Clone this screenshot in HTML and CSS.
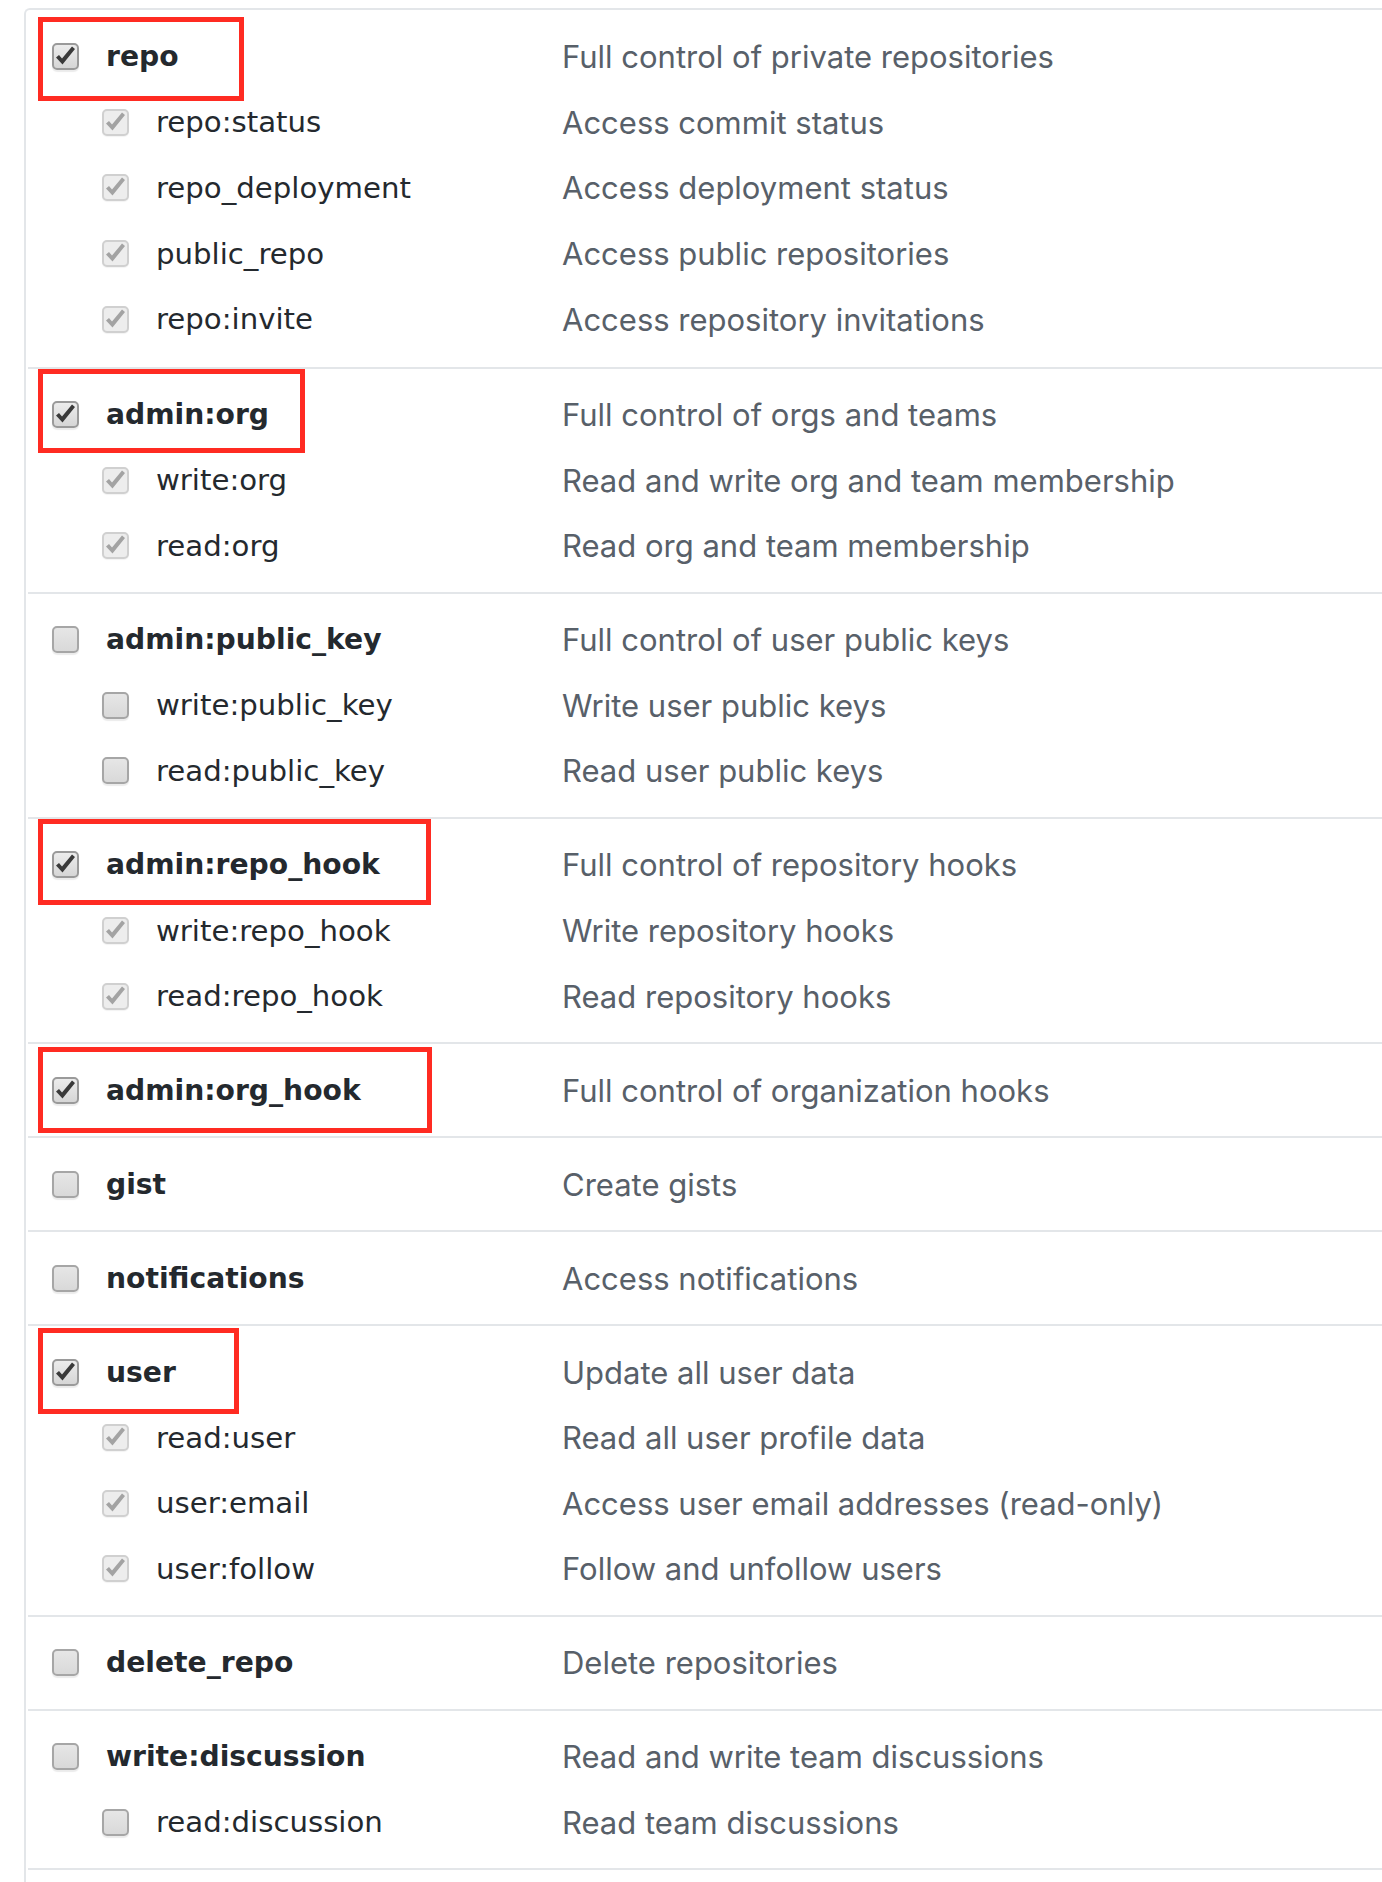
FILE: index.html
```html
<!DOCTYPE html>
<html lang="en">
<head>
<meta charset="utf-8">
<title>Scopes</title>
<link rel="stylesheet" href="styles.css">
</head>
<body>
<div class="scopes">

  <div class="section first">
    <div class="row parent">
      <span class="mark mark-repo"></span>
      <label class="name"><span class="cb on"><svg viewBox="0 0 27 27"><path d="M4 14.5 L7 12 L10 15.5 L20 3.5 L23 6 L10.5 21.5 Z"/></svg></span>repo</label>
      <span class="desc">Full control of private repositories</span>
    </div>
    <div class="row child">
      <label class="name"><span class="cb on dis"><svg viewBox="0 0 27 27"><path d="M4 14.5 L7 12 L10 15.5 L20 3.5 L23 6 L10.5 21.5 Z"/></svg></span>repo:status</label>
      <span class="desc">Access commit status</span>
    </div>
    <div class="row child">
      <label class="name"><span class="cb on dis"><svg viewBox="0 0 27 27"><path d="M4 14.5 L7 12 L10 15.5 L20 3.5 L23 6 L10.5 21.5 Z"/></svg></span>repo_deployment</label>
      <span class="desc">Access deployment status</span>
    </div>
    <div class="row child">
      <label class="name"><span class="cb on dis"><svg viewBox="0 0 27 27"><path d="M4 14.5 L7 12 L10 15.5 L20 3.5 L23 6 L10.5 21.5 Z"/></svg></span>public_repo</label>
      <span class="desc">Access public repositories</span>
    </div>
    <div class="row child">
      <label class="name"><span class="cb on dis"><svg viewBox="0 0 27 27"><path d="M4 14.5 L7 12 L10 15.5 L20 3.5 L23 6 L10.5 21.5 Z"/></svg></span>repo:invite</label>
      <span class="desc">Access repository invitations</span>
    </div>
  </div>

  <div class="section">
    <div class="row parent">
      <span class="mark mark-org"></span>
      <label class="name"><span class="cb on"><svg viewBox="0 0 27 27"><path d="M4 14.5 L7 12 L10 15.5 L20 3.5 L23 6 L10.5 21.5 Z"/></svg></span>admin:org</label>
      <span class="desc">Full control of orgs and teams</span>
    </div>
    <div class="row child">
      <label class="name"><span class="cb on dis"><svg viewBox="0 0 27 27"><path d="M4 14.5 L7 12 L10 15.5 L20 3.5 L23 6 L10.5 21.5 Z"/></svg></span>write:org</label>
      <span class="desc">Read and write org and team membership</span>
    </div>
    <div class="row child">
      <label class="name"><span class="cb on dis"><svg viewBox="0 0 27 27"><path d="M4 14.5 L7 12 L10 15.5 L20 3.5 L23 6 L10.5 21.5 Z"/></svg></span>read:org</label>
      <span class="desc">Read org and team membership</span>
    </div>
  </div>

  <div class="section">
    <div class="row parent">
      <label class="name"><span class="cb"></span>admin:public_key</label>
      <span class="desc">Full control of user public keys</span>
    </div>
    <div class="row child">
      <label class="name"><span class="cb"></span>write:public_key</label>
      <span class="desc">Write user public keys</span>
    </div>
    <div class="row child">
      <label class="name"><span class="cb"></span>read:public_key</label>
      <span class="desc">Read user public keys</span>
    </div>
  </div>

  <div class="section">
    <div class="row parent">
      <span class="mark mark-repohook"></span>
      <label class="name"><span class="cb on"><svg viewBox="0 0 27 27"><path d="M4 14.5 L7 12 L10 15.5 L20 3.5 L23 6 L10.5 21.5 Z"/></svg></span>admin:repo_hook</label>
      <span class="desc">Full control of repository hooks</span>
    </div>
    <div class="row child">
      <label class="name"><span class="cb on dis"><svg viewBox="0 0 27 27"><path d="M4 14.5 L7 12 L10 15.5 L20 3.5 L23 6 L10.5 21.5 Z"/></svg></span>write:repo_hook</label>
      <span class="desc">Write repository hooks</span>
    </div>
    <div class="row child">
      <label class="name"><span class="cb on dis"><svg viewBox="0 0 27 27"><path d="M4 14.5 L7 12 L10 15.5 L20 3.5 L23 6 L10.5 21.5 Z"/></svg></span>read:repo_hook</label>
      <span class="desc">Read repository hooks</span>
    </div>
  </div>

  <div class="section">
    <div class="row parent">
      <span class="mark mark-orghook"></span>
      <label class="name"><span class="cb on"><svg viewBox="0 0 27 27"><path d="M4 14.5 L7 12 L10 15.5 L20 3.5 L23 6 L10.5 21.5 Z"/></svg></span>admin:org_hook</label>
      <span class="desc">Full control of organization hooks</span>
    </div>
  </div>

  <div class="section">
    <div class="row parent">
      <label class="name"><span class="cb"></span>gist</label>
      <span class="desc">Create gists</span>
    </div>
  </div>

  <div class="section">
    <div class="row parent">
      <label class="name"><span class="cb"></span>notifications</label>
      <span class="desc">Access notifications</span>
    </div>
  </div>

  <div class="section">
    <div class="row parent">
      <span class="mark mark-user"></span>
      <label class="name"><span class="cb on"><svg viewBox="0 0 27 27"><path d="M4 14.5 L7 12 L10 15.5 L20 3.5 L23 6 L10.5 21.5 Z"/></svg></span>user</label>
      <span class="desc">Update all user data</span>
    </div>
    <div class="row child">
      <label class="name"><span class="cb on dis"><svg viewBox="0 0 27 27"><path d="M4 14.5 L7 12 L10 15.5 L20 3.5 L23 6 L10.5 21.5 Z"/></svg></span>read:user</label>
      <span class="desc">Read all user profile data</span>
    </div>
    <div class="row child">
      <label class="name"><span class="cb on dis"><svg viewBox="0 0 27 27"><path d="M4 14.5 L7 12 L10 15.5 L20 3.5 L23 6 L10.5 21.5 Z"/></svg></span>user:email</label>
      <span class="desc">Access user email addresses (read-only)</span>
    </div>
    <div class="row child">
      <label class="name"><span class="cb on dis"><svg viewBox="0 0 27 27"><path d="M4 14.5 L7 12 L10 15.5 L20 3.5 L23 6 L10.5 21.5 Z"/></svg></span>user:follow</label>
      <span class="desc">Follow and unfollow users</span>
    </div>
  </div>

  <div class="section">
    <div class="row parent">
      <label class="name"><span class="cb"></span>delete_repo</label>
      <span class="desc">Delete repositories</span>
    </div>
  </div>

  <div class="section">
    <div class="row parent">
      <label class="name"><span class="cb"></span>write:discussion</label>
      <span class="desc">Read and write team discussions</span>
    </div>
    <div class="row child">
      <label class="name"><span class="cb"></span>read:discussion</label>
      <span class="desc">Read team discussions</span>
    </div>
  </div>

</div>
</body>
</html>
```

FILE: styles.css
```css
html, body {
  margin: 0;
  padding: 0;
  background: #ffffff;
  height: 1882px;
  overflow: hidden;
}

.scopes {
  margin: 8px 0 0 24px;
  padding: 0 0 12px 2px;
  border-top: 2px solid #e3e6e9;
  border-left: 2px solid #e3e6e9;
  border-top-left-radius: 6px;
}

.section {
  padding: 13.2px 0;
  border-bottom: 2px solid #e3e6e9;
}

.section.first {
  padding: 14px 0 14.7px;
}

.row {
  position: relative;
  height: 65.6px;
  display: grid;
  grid-template-columns: 534px 1fr;
  align-items: center;
}

.name {
  display: flex;
  align-items: center;
  font-family: "DejaVu Sans", Verdana, sans-serif;
  font-size: 29.2px;
  color: #24292e;
  white-space: nowrap;
}

.parent .name {
  padding-left: 24px;
  font-weight: bold;
  font-size: 28.2px;
}

.child .name {
  padding-left: 74px;
}

.desc {
  font-family: Inter, "Liberation Sans", sans-serif;
  font-size: 31px;
  color: #586069;
  white-space: nowrap;
}

.cb {
  box-sizing: border-box;
  flex: none;
  width: 27px;
  height: 27px;
  margin-right: 27px;
  border: 2px solid #a6a6a6;
  border-radius: 5px;
  background: linear-gradient(#e6e6e6, #d9d9d9);
  box-shadow: 0 1.5px 1px rgba(0, 0, 0, 0.08);
  position: relative;
}

.cb svg {
  position: absolute;
  left: -2px;
  top: -2px;
  width: 27px;
  height: 27px;
}

.cb.on svg path {
  fill: #3a3a3a;
}

.cb.on {
  border-color: #9a9a9a;
  background: linear-gradient(#ececec, #d6d6d6);
}

.cb.on.dis {
  border-color: #d0d0d0;
  background: #ededed;
  box-shadow: 0 1px 1px rgba(0, 0, 0, 0.05);
}

.cb.on.dis svg path {
  fill: #a3a3a3;
}

.mark {
  position: absolute;
  left: 10px;
  box-sizing: border-box;
  border: 5px solid #ff2b22;
  z-index: 2;
  pointer-events: none;
}

.mark-repo {
  top: -7px;
  width: 206px;
  height: 84px;
}

.mark-org {
  top: -13px;
  width: 267px;
  height: 84px;
}

.mark-repohook {
  top: -13px;
  width: 393px;
  height: 86px;
}

.mark-orghook {
  top: -10px;
  width: 394px;
  height: 86px;
}

.mark-user {
  top: -11px;
  width: 201px;
  height: 86px;
}
```
